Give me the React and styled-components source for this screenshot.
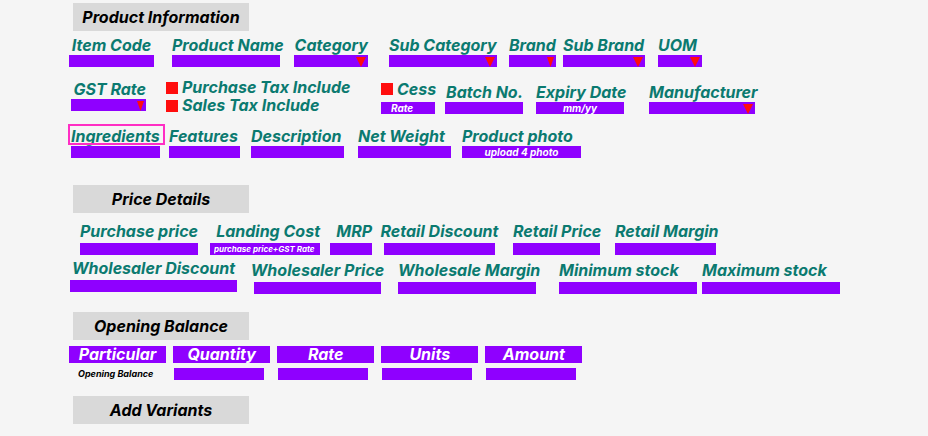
import React, { useId } from "react";
import styled, { createGlobalStyle, css } from "styled-components";

const color = {
  page: "#f5f5f5",
  heading: "#d9d9d9",
  label: "#0b7a70",
  fill: "#8f00ff",
  alert: "#ff0d0d",
  focus: "#ff2ec4",
};

const GlobalStyle = createGlobalStyle`
  *, *::before, *::after { box-sizing: border-box; }
  body {
    margin: 0;
    background: ${color.page};
    color: #000;
    font-family: Inter, "Liberation Sans", sans-serif;
    font-size: 16px;
    font-weight: 700;
    font-style: italic;
  }
  input, select { font: inherit; border-radius: 0; }
`;

const Page = styled.main`
  padding: 3px 0 12px 69px;
  overflow-x: clip;
`;

const Section = styled.section`
  display: flex;
  flex-direction: column;
  margin-bottom: ${(p) => p.$after}px;
`;

const Heading = styled.h2`
  align-self: flex-start;
  min-width: 176px;
  margin: 0 0 ${(p) => p.$after || 4}px 4px;
  padding: 0 8px;
  background: ${color.heading};
  font-size: 16px;
  line-height: 28px;
  text-align: center;
  white-space: nowrap;
`;

const FORM_UNITS = 859;

/* $tracks alternates gap and field widths, as shares of the form's width. */
const Row = styled.div`
  display: grid;
  grid-template-columns: ${({ $tracks }) => {
    const rest = FORM_UNITS - $tracks.reduce((a, b) => a + b, 0);
    return [...$tracks, rest].map((t) => `minmax(0, ${t}fr)`).join(" ");
  }};
  align-items: end;
  margin-bottom: ${(p) => p.$after || 0}px;
  ${({ $tracks }) =>
    $tracks
      .filter((_, i) => i % 2)
      .map((_, i) => `& > :nth-child(${i + 1}) { grid-column: ${2 * i + 2}; grid-row: 1; }`)
      .join("\n")}
`;

const FieldBox = styled.div`
  display: flex;
  flex-direction: column;
  gap: ${(p) => p.$gap || 0}px;
  ${(p) => p.$top && css`align-self: start;`}
  ${(p) => p.$raised && css`padding-bottom: 2px;`}
`;

const Label = styled.label`
  position: relative;
  align-self: ${(p) => p.$align || "flex-start"};
  color: ${color.label};
  line-height: 20px;
  white-space: nowrap;
  ${(p) =>
    p.$marked &&
    css`
      &::after {
        content: "";
        position: absolute;
        inset: -2px -5px 1px -3px;
        border: 2px solid ${color.focus};
      }
    `}
`;

const TextInput = styled.input`
  display: block;
  width: 100%;
  height: 12px;
  padding: 0 10px;
  border: 0;
  background: ${color.fill};
  color: #fff;
  font-size: ${(p) => (p.$small ? 8 : 10)}px;
  text-align: ${(p) => p.$text || "left"};
  ${(p) => p.$small && css`padding: 0 4px;`}
  &::placeholder { color: #fff; opacity: 1; }
`;

const SelectBox = styled.div`
  position: relative;
`;

const Select = styled.select`
  display: block;
  appearance: none;
  width: 100%;
  height: 12px;
  padding: 0 12px 0 4px;
  border: 0;
  background: ${color.fill};
  color: #fff;
  font-size: 10px;
`;

const Arrow = styled.svg`
  position: absolute;
  top: 2px;
  right: 2px;
  width: ${(p) => (p.$narrow ? 7 : 10)}px;
  height: 10px;
  fill: ${color.alert};
  pointer-events: none;
`;

const CheckGroup = styled.div`
  display: flex;
  flex-direction: column;
  gap: 1px;
`;

const CheckLabel = styled.label`
  display: flex;
  align-items: center;
  gap: 4px;
  color: ${color.label};
  line-height: ${(p) => p.$line || 17}px;
  white-space: nowrap;
`;

const CheckBox = styled.input`
  appearance: none;
  flex: none;
  width: 12px;
  height: 12px;
  margin: 0;
  background: ${color.alert};
`;

const BalanceTable = styled.table`
  width: calc(60% + 12px);
  margin: -5px -7px;
  border-spacing: 7px 5px;
  table-layout: fixed;
`;

const HeadCell = styled.th`
  padding: 0;
  background: ${color.fill};
  color: #fff;
  line-height: 17px;
  text-align: center;
`;

const RowName = styled.th`
  padding: 0 0 0 9px;
  font-size: 9px;
  line-height: 12px;
  text-align: left;
  white-space: nowrap;
`;

const ValueCell = styled.td`
  padding: 0 6px 0 1px;
`;

function Field({ label, placeholder, small, text, select, narrow, align, marked, gap, top, raised }) {
  const id = useId();
  return (
    <FieldBox $gap={gap} $top={top} $raised={raised}>
      <Label htmlFor={id} $align={align} $marked={marked}>{label}</Label>
      {select ? (
        <SelectBox>
          <Select id={id} defaultValue=""><option value="" /></Select>
          <Arrow $narrow={narrow} viewBox="0 0 10 9" preserveAspectRatio="none" aria-hidden="true">
            <path d="M0 0H10L5 9Z" />
          </Arrow>
        </SelectBox>
      ) : (
        <TextInput id={id} placeholder={placeholder} $small={small} $text={text} />
      )}
    </FieldBox>
  );
}

const balanceColumns = ["Particular", "Quantity", "Rate", "Units", "Amount"];

export default function App() {
  return (
    <>
      <GlobalStyle />
      <Page>
        <Section $after={27}>
          <Heading>Product Information</Heading>
          <Row $after={12} $tracks={[0, 85, 18, 108, 14, 74, 21, 108, 12, 47, 7, 82, 13, 44]}>
            <Field label="Item Code" align="center" />
            <Field label="Product Name" />
            <Field label="Category" select align="flex-end" />
            <Field label="Sub Category" select />
            <Field label="Brand" select narrow />
            <Field label="Sub Brand" select />
            <Field label="UOM" select />
          </Row>
          <Row $after={12} $tracks={[2, 75, 20, 184, 31, 54, 10, 78, 13, 88, 25, 106]}>
            <Field label="GST Rate" select narrow align="flex-end" top />
            <CheckGroup>
              <CheckLabel><CheckBox type="checkbox" />Purchase Tax Include</CheckLabel>
              <CheckLabel><CheckBox type="checkbox" />Sales Tax Include</CheckLabel>
            </CheckGroup>
            <FieldBox $gap={3}>
              <CheckLabel $line={20}><CheckBox type="checkbox" />Cess</CheckLabel>
              <TextInput aria-label="Cess rate" placeholder="Rate" />
            </FieldBox>
            <Field label="Batch No." align="flex-end" />
            <Field label="Expiry Date" placeholder="mm/yy" text="center" />
            <Field label="Manufacturer" select />
          </Row>
          <Row $tracks={[2, 89, 9, 71, 11, 93, 14, 93, 11, 119]}>
            <Field label="Ingredients" marked />
            <Field label="Features" />
            <Field label="Description" />
            <Field label="Net Weight" />
            <Field label="Product photo" placeholder="upload 4 photo" text="center" />
          </Row>
        </Section>

        <Section $after={18}>
          <Heading $after={8}>Price Details</Heading>
          <Row $after={3} $tracks={[11, 118, 12, 110, 10, 42, 12, 111, 18, 87, 15, 101]}>
            <Field gap={2} label="Purchase price" />
            <Field gap={2} label="Landing Cost" align="flex-end" placeholder="purchase price+GST Rate" small raised={false} />
            <Field gap={2} label="MRP" align="flex-end" />
            <Field gap={2} label="Retail Discount" align="center" />
            <Field gap={2} label="Retail Price" />
            <Field gap={2} label="Retail Margin" />
          </Row>
          <Row $tracks={[1, 167, 17, 127, 17, 138, 23, 138, 5, 138]}>
            <Field gap={2} label="Wholesaler Discount" align="center" raised />
            <Field gap={2} label="Wholesaler Price" align="center" />
            <Field gap={2} label="Wholesale Margin" />
            <Field gap={2} label="Minimum stock" />
            <Field gap={2} label="Maximum stock" />
          </Row>
        </Section>

        <Section $after={16}>
          <Heading $after={6}>Opening Balance</Heading>
          <BalanceTable>
            <thead>
              <tr>{balanceColumns.map((c) => <HeadCell key={c} scope="col">{c}</HeadCell>)}</tr>
            </thead>
            <tbody>
              <tr>
                <RowName scope="row">Opening Balance</RowName>
                {balanceColumns.slice(1).map((c) => (
                  <ValueCell key={c}><TextInput aria-label={`Opening balance ${c}`} /></ValueCell>
                ))}
              </tr>
            </tbody>
          </BalanceTable>
        </Section>

        <Section $after={0}>
          <Heading>Add Variants</Heading>
        </Section>
      </Page>
    </>
  );
}
